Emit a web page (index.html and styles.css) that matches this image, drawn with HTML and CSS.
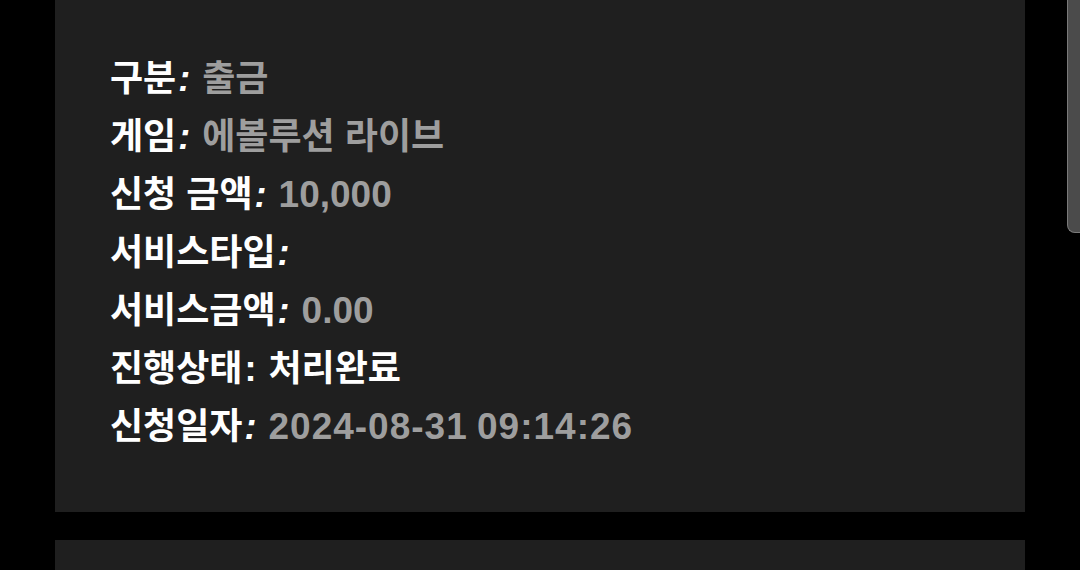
FILE: index.html
```html
<!DOCTYPE html>
<html lang="ko">
<head>
  <meta charset="UTF-8">
  <meta name="viewport" content="width=device-width, initial-scale=1.0">
  <title>신청 내역</title>
  <link rel="stylesheet" href="styles.css">
</head>
<body>

<div class="list">
  <div class="card">
    <div class="row"><span class="label">구분</span><span class="colon">:</span><span class="value">출금</span></div>
    <div class="row"><span class="label">게임</span><span class="colon">:</span><span class="value">에볼루션 라이브</span></div>
    <div class="row"><span class="label">신청 금액</span><span class="colon">:</span><span class="value num">10,000</span></div>
    <div class="row"><span class="label">서비스타입</span><span class="colon">:</span><span class="value"></span></div>
    <div class="row"><span class="label">서비스금액</span><span class="colon">:</span><span class="value num">0.00</span></div>
    <div class="row status"><span class="label">진행상태</span><span class="colon plain">:</span><span class="value">처리완료</span></div>
    <div class="row"><span class="label">신청일자</span><span class="colon">:</span><span class="value num date">2024-08-31 09:14:26</span></div>
  </div>
  <div class="card"></div>
</div>

<div class="scrollbar"></div>

</body>
</html>
```

FILE: styles.css
```css
body {
  background-color: #000;
  margin: 0;
  height: 570px;
  overflow: hidden;
  font-family: "Liberation Sans", "Noto Sans CJK KR", sans-serif;
  color: #fff;
}

.list {
  display: flex;
  flex-direction: column;
  gap: 28px;
  width: 970px;
  margin-left: 55px;
}

.card {
  background-color: #1f1f1f;
  padding: 46px 55px 60px;
  min-height: 200px;
}

.row {
  display: flex;
  align-items: baseline;
  height: 58px;
  font-size: 36px;
  line-height: 58px;
  font-weight: 700;
  white-space: nowrap;
}

.label {
  font-family: "Noto Sans CJK KR", sans-serif;
}

.colon {
  font-style: italic;
  margin-left: 2px;
  margin-right: 12px;
}

.colon.plain {
  font-style: normal;
}

.value {
  color: #9e9e9e;
  font-family: "Noto Sans CJK KR", sans-serif;
}

.value.num {
  font-family: "Liberation Sans", sans-serif;
  font-size: 37px;
}

.value.date {
  letter-spacing: 1px;
  word-spacing: -2px;
}

.status .value {
  color: #fff;
}

.scrollbar {
  position: absolute;
  top: 0;
  right: 0;
  width: 12px;
  height: 232px;
  background-color: #4b4b4b;
  border: 1px solid #7a7a7a;
  border-top: none;
  border-right: none;
  border-bottom-left-radius: 8px;
}
```
